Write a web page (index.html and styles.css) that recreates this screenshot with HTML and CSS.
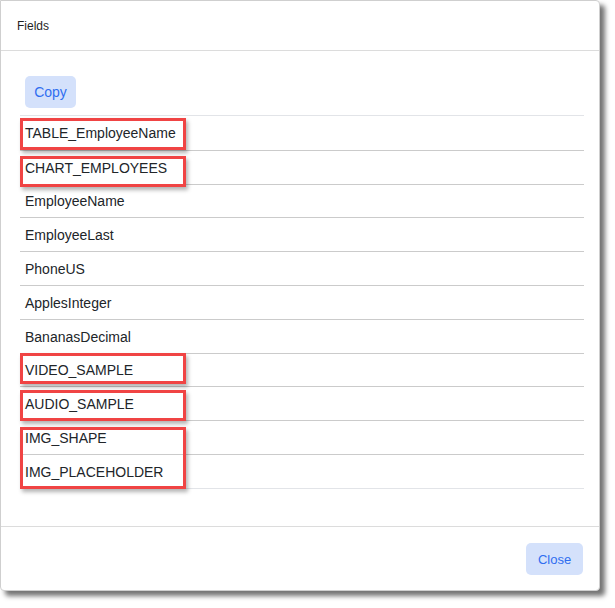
FILE: index.html
```html
<!DOCTYPE html>
<html>
<head>
<meta charset="utf-8">
<link rel="stylesheet" href="styles.css">
</head>
<body>
<div class="dialog">
  <div class="dialog-header">Fields</div>
  <div class="dialog-body">
    <button class="btn btn-copy">Copy</button>
    <div class="field-list">
      <div class="field">TABLE_EmployeeName</div>
      <div class="field">CHART_EMPLOYEES</div>
      <div class="field">EmployeeName</div>
      <div class="field">EmployeeLast</div>
      <div class="field">PhoneUS</div>
      <div class="field">ApplesInteger</div>
      <div class="field">BananasDecimal</div>
      <div class="field">VIDEO_SAMPLE</div>
      <div class="field">AUDIO_SAMPLE</div>
      <div class="field">IMG_SHAPE</div>
      <div class="field">IMG_PLACEHOLDER</div>
    </div>
  </div>
  <div class="dialog-footer">
    <button class="btn btn-close">Close</button>
  </div>
  <div class="mark mark-1"></div>
  <div class="mark mark-2"></div>
  <div class="mark mark-3"></div>
  <div class="mark mark-4"></div>
  <div class="mark mark-5"></div>
</div>
</body>
</html>
```
FILE: styles.css
```css
html, body {
  margin: 0;
  padding: 0;
  background: #ffffff;
}
html {
  min-height: 608px;
}
body {
  min-height: 608px;
  font-family: "Liberation Sans", Arial, sans-serif;
  color: #212529;
}
.dialog {
  position: relative;
  box-sizing: border-box;
  width: 600px;
  height: 591px;
  background: #fff;
  border: 1px solid #cfcfcf;
  border-radius: 0 4px 4px 4px;
  box-shadow: 5px 5px 5px rgba(0, 0, 0, 0.55);
  display: flex;
  flex-direction: column;
}
.dialog-header {
  height: 50px;
  box-sizing: border-box;
  padding: 17px 0 0 16px;
  font-size: 12px;
  line-height: 16px;
  color: #1f1f1f;
  border-bottom: 1px solid #dcdcdc;
}
.dialog-body {
  flex: 1;
  padding: 25px 15px 0 19px;
  display: flex;
  flex-direction: column;
  align-items: flex-start;
  border-bottom: 1px solid #dcdcdc;
}
.btn {
  font-family: "Liberation Sans", Arial, sans-serif;
  font-size: 14px;
  color: #2f6ef0;
  background: #d4e1fb;
  border: none;
  border-radius: 5px;
  height: 32px;
  padding: 0 9px;
  cursor: pointer;
}
.btn-copy {
  margin-left: 5px;
  width: 51px;
  padding: 0;
}
.field-list {
  align-self: stretch;
  margin-top: 7px;
  border-top: 1px solid #e2e4e8;
  border-bottom: 1px solid #e2e4e8;
}
.field {
  box-sizing: border-box;
  height: 33.8px;
  padding: 1px 0 0 5px;
  display: flex;
  align-items: center;
  font-size: 14px;
  color: #212529;
  border-top: 1px solid #cbcbcb;
}
.field:first-child {
  border-top: none;
}
.dialog-footer {
  height: 63px;
  box-sizing: border-box;
  display: flex;
  justify-content: flex-end;
  align-items: flex-start;
  padding: 16px 16px 0 0;
}
.btn-close {
  width: 57px;
  height: 32px;
  padding: 0;
  font-size: 13px;
}
.mark {
  position: absolute;
  left: 19px;
  width: 166px;
  box-sizing: border-box;
  border: 3px solid #f04444;
  box-shadow: 2px 3px 4px rgba(0, 0, 0, 0.3);
  pointer-events: none;
}
.mark-1 { top: 117px; height: 32px; }
.mark-2 { top: 155px; height: 31px; }
.mark-3 { top: 352px; height: 31px; }
.mark-4 { top: 389px; height: 31px; }
.mark-5 { top: 426px; height: 62px; }
```
